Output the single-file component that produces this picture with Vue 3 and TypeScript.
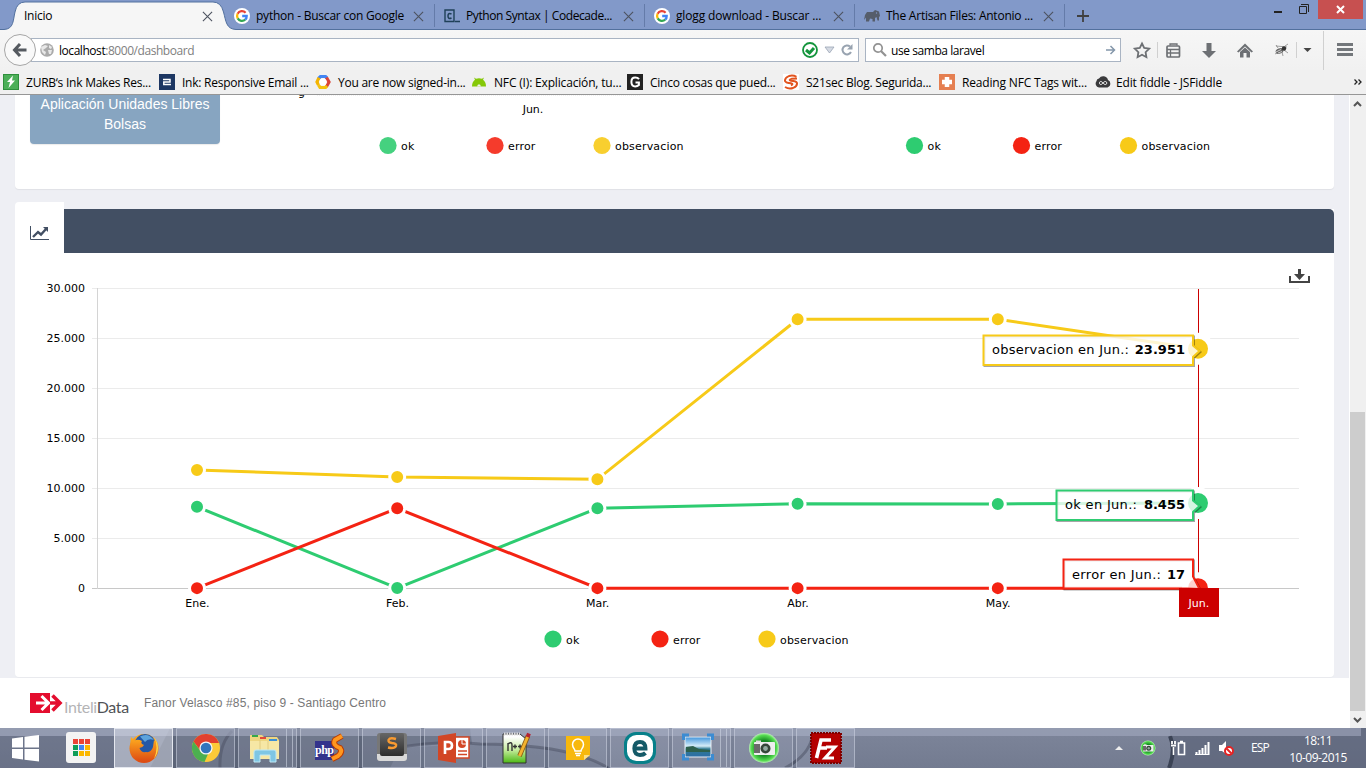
<script setup lang="ts">
interface Link { label: string; icon: string; track?: number }
interface Series { name: string; color: string; values: number[] }

const tabs: Link[] = [
  { label: 'python - Buscar con Google', icon: 'google', track: -0.22 },
  { label: 'Python Syntax | Codecade...', icon: 'codecademy', track: -0.42 },
  { label: 'glogg download - Buscar ...', icon: 'google', track: -0.15 },
  { label: 'The Artisan Files: Antonio ...', icon: 'elephant', track: -0.24 },
]
const bookmarks: Link[] = [
  { label: 'ZURB‘s Ink Makes Res...', icon: 'zurb' },
  { label: 'Ink: Responsive Email ...', icon: 'ink' },
  { label: 'You are now signed-in...', icon: 'cloud' },
  { label: 'NFC (I): Explicación, tu...', icon: 'android' },
  { label: 'Cinco cosas que pued...', icon: 'giz' },
  { label: 'S21sec Blog. Segurida...', icon: 's21' },
  { label: 'Reading NFC Tags wit...', icon: 'plus' },
  { label: 'Edit fiddle - JSFiddle', icon: 'fiddle' },
]
const apps = ['firefox', 'chrome', 'explorer', 'phps', 'sublime', 'ppt', 'npp', 'keep', 'eset', 'photos', 'camera', 'filezilla']
const stacked = ['explorer', 'photos']
const launcherDots = ['#ea4335', '#ea4335', '#ea4335', '#0f9d58', '#4285f4', '#fbb800', '#0f9d58', '#fbb800', '#fbb800']

const months = ['Ene.', 'Feb.', 'Mar.', 'Abr.', 'May.']
const ticks = [0, 5000, 10000, 15000, 20000, 25000, 30000]
const series: Series[] = [
  { name: 'ok', color: '#2ecc71', values: [8150, 20, 8000, 8450, 8440, 8520] },
  { name: 'error', color: '#f42313', values: [17, 8000, 17, 17, 17, 17] },
  { name: 'observacion', color: '#f7ca18', values: [11830, 11120, 10900, 26900, 26900, 23951] },
]
const px = (i: number): number => 197 + i * 200.2
const py = (v: number): number => 588.3 - v / 100
const tickLabel = (v: number): string => (v === 0 ? '0' : `${v / 1000}.000`)
const linePoints = (s: Series): string => s.values.map((v, i) => `${px(i)},${py(v)}`).join(' ')

const tips = [
  { label: 'observacion en Jun.:', value: '23.951', color: '#f7ca18', textX: 992, textY: 354, width: 137, path: 'M983.5 335.5H1193V345.500L1199.500 351L1193 357V365H983.5Z' },
  { label: 'ok en Jun.:', value: '8.455', color: '#2ecc71', textX: 1065, textY: 509, width: 72, path: 'M1056.5 490.5H1193V500.500L1199.500 506L1193 512V520H1056.5Z' },
  { label: 'error en Jun.:', value: '17', color: '#f42313', textX: 1072, textY: 579, width: 89, path: 'M1063.5 559.5H1193V576.500L1199.500 589L1187 588.5H1063.5Z' },
]
const legend = (x: number, y: number, colors: string[]) =>
  series.map((s, i) => ({ name: s.name, color: colors[i], x: x + i * 107, y }))
const solid = series.map((s) => s.color)
const soft = ['#45d17f', '#f53b2c', '#f8cf2f']
const topLegends = [...legend(388, 145.5, soft), ...legend(914.5, 145.5, solid)]
const mainLegend = legend(553, 639, solid)
</script>

<template>
  <div class="screen">
    <svg class="defs" width="0" height="0">
      <defs>
        <linearGradient id="gFox" x1="0" y1="0" x2="0" y2="1"><stop offset="0" stop-color="#ffb01f" /><stop offset="1" stop-color="#dd4a12" /></linearGradient>
        <linearGradient id="gSky" x1="0" y1="0" x2="0" y2="1"><stop offset="0" stop-color="#3f94dc" /><stop offset=".45" stop-color="#d5ecf8" /><stop offset=".6" stop-color="#2f7a92" /><stop offset="1" stop-color="#2d6da8" /></linearGradient>
        <linearGradient id="gNpp" x1="0" y1="0" x2="0" y2="1"><stop offset=".1" stop-color="#fff" /><stop offset=".55" stop-color="#c4ec9c" /><stop offset="1" stop-color="#4cb814" /></linearGradient>
        <linearGradient id="gKey" x1="0" y1="0" x2="0" y2="1"><stop offset="0" stop-color="#666" /><stop offset="1" stop-color="#2d2d2d" /></linearGradient>
        <radialGradient id="gCam"><stop offset=".5" stop-color="#178a24" /><stop offset=".85" stop-color="#55dc50" /><stop offset="1" stop-color="#b9efb7" /></radialGradient>
      </defs>
      <symbol id="google" viewBox="0 0 16 16"><circle cx="8" cy="8" r="8" fill="#fff" /><g fill="none" stroke-width="2.3"><path d="M11.6 4.7A5 5 0 0 0 3.6 5.7" stroke="#ea4335" /><path d="M3.6 5.7A5 5 0 0 0 3.7 10.4" stroke="#fbbc05" /><path d="M3.7 10.4A5 5 0 0 0 11.2 11.7" stroke="#34a853" /><path d="M11.2 11.7A4.8 4.8 0 0 0 12.7 8H8.2" stroke="#4285f4" /></g></symbol>
      <symbol id="codecademy" viewBox="0 0 16 16"><path d="M1 2H10V13.5H1Z M11 13.500H16" fill="none" stroke="#1f4058" stroke-width="1.4" /><path d="M7.5 6Q4 4.5 4 8T7.5 10" fill="none" stroke="#1f4058" stroke-width="1.5" /></symbol>
      <symbol id="elephant" viewBox="0 0 16 16"><path d="M0 12L1 7L3 4L9 4L11 2L15 3.500L16 8L15 9L15 12.500H13.5L12.5 9L11 10V13.500H8.5V11L6 10.5L5 13.500H2V9.500Z" fill="#555d6b" /><circle cx="12.5" cy="5" r=".7" fill="#8299c9" /></symbol>
      <symbol id="zurb" viewBox="0 0 16 16"><rect width="16" height="16" fill="#2f8f3c" /><rect x="1" y="1" width="14" height="14" fill="#4caf58" /><path d="M10 1.5L4 8H7L5.5 14L12 6.5H9Z" fill="#fff" /></symbol>
      <symbol id="ink" viewBox="0 0 16 16"><rect width="16" height="16" fill="#1d3763" /><path d="M4 5.5H11V8H4.8V10.5H12" fill="none" stroke="#fff" stroke-width="1.5" /></symbol>
      <symbol id="cloud" viewBox="0 0 16 16"><g fill="none" stroke-width="3.2"><path d="M3.500 4.500L5.500 2.500H10.5L12 4" stroke="#4285f4" /><path d="M11.5 3.5L14 8L11.5 12.5" stroke="#db4437" /><path d="M4 3.800L2 8L3.5 11" stroke="#f4b400" /><path d="M3.5 11L5 13.5H10.5L12 12" stroke="#f4c20d" /></g><circle cx="8" cy="8" r="3.6" fill="#fff" /></symbol>
      <symbol id="android" viewBox="0 0 16 16"><path d="M1 12.5Q1 8 4 5.8L3 3.5L5 4.8Q8 3.7 11 4.8L13 3.5L12 5.8Q15 8 15 12.5Z" fill="#85c808" /><path d="M6 12.500L7 10.500H9L10 12.500Z" fill="#f0f0f0" /></symbol>
      <symbol id="giz" viewBox="0 0 16 16"><rect width="16" height="16" fill="#222" /><path d="M12 5.2Q10.8 3.6 8.2 3.6Q4.4 3.6 4.4 8T8.2 12.4Q10.5 12.4 11.9 11V8.5H8.5" fill="none" stroke="#fff" stroke-width="2" /></symbol>
      <symbol id="s21" viewBox="0 0 16 16"><rect width="16" height="16" fill="#fff" /><path d="M13.500 2.800Q10 .8 6 2Q1.500 4 2 7Q3 9 8 9.200Q11 9.800 8 11.500M2 13Q6 15.500 10 14Q14.500 12 14 9Q13 7 8 6.800Q5 6 8.500 4.800L14 4.500" fill="none" stroke="#e2541f" stroke-width="1.9" /></symbol>
      <symbol id="plus" viewBox="0 0 16 16"><rect width="16" height="16" fill="#e57f51" /><path d="M8 3V13M3 8H13" stroke="#fff" stroke-width="4.500" /></symbol>
      <symbol id="fiddle" viewBox="0 0 16 16"><path d="M4 13.5A4 4 0 0 1 1.5 7A3 3 0 0 1 4 4.5A5 5 0 0 1 13 6A4 4 0 0 1 12.5 13.5Z" fill="#3a3a3c" /><path d="M8 9C6.5 7 4.5 7 4.5 9S6.5 11 8 9S11.7 7 11.7 9S9.5 11 8 9" fill="none" stroke="#fff" /></symbol>

      <symbol id="firefox" viewBox="0 0 32 32"><circle cx="16" cy="16.5" r="14.5" fill="url(#gFox)" /><circle cx="17" cy="12.5" r="10.500" fill="#2458a6" /><path d="M12 4.500Q20 0 26 8Q20 6 17 10Z" fill="#5ca3dc" /><path d="M3 5L6.5 8.500Q10 7 14 9Q12 12 16 13Q15 15.500 11.5 16Q13 21 18 20Q23 21 25 15L26 8Q32 15 28 24Q21 33 9 28Q0 22 3 5Z" fill="url(#gFox)" /><path d="M26 5Q34 16 26 27Q31 15 26 5" fill="#ffd445" /></symbol>
      <symbol id="chrome" viewBox="0 0 32 32"><circle cx="16" cy="16" r="14" fill="#fcca38" /><path d="M3.5 9.5A14 14 0 0 1 29 11H16L10 18Z" fill="#e2402f" /><path d="M3.5 9.5L10.5 19L18 22L14.5 30A14 14 0 0 1 3.5 9.5" fill="#4caf50" /><circle cx="16" cy="16" r="6.6" fill="#f5f5f5" /><circle cx="16" cy="16" r="5.3" fill="#3275bd" /></symbol>
      <symbol id="explorer" viewBox="0 0 32 32"><path d="M2 3H14L16 5H29L31 8V27H2Z" fill="#eed680" /><path d="M2 9H31V27H2Z" fill="#f6e7a5" /><path d="M12 8V19M20 9V18" stroke="#e2cc80" /><path d="M4 4H10" stroke="#35a84a" stroke-width="2" /><path d="M12 6H18" stroke="#e24a3b" stroke-width="2" /><path d="M21 8H29" stroke="#3a8fd8" stroke-width="2" /><path d="M6 30V20Q6 18 8 18H26Q28 18 28 20V30H22V23H12V30Z" fill="#7fc6e4" stroke="#bfe8f5" /></symbol>
      <symbol id="phps" viewBox="0 0 32 32"><rect x="1" y="9" width="19" height="19" fill="#33338c" /><path d="M28 4L21 8Q18 13 26 16Q29 20 24 24L18 27" fill="none" stroke="#b83b05" stroke-width="6" /><path d="M28 4L21 8Q18 13 26 16Q29 20 24 24L18 27" fill="none" stroke="#ff971f" stroke-width="4" /></symbol>
      <symbol id="sublime" viewBox="0 0 32 32"><rect x="1" y="1" width="30" height="28" rx="3" fill="#777" /><path d="M1 22L31 22V26Q31 29 28 29H4Q1 29 1 26Z" fill="#d9d9d9" /><rect x="4" y="1" width="24" height="23" rx="2" fill="url(#gKey)" /><path d="M20 7Q14 5 12.500 8Q12 10.500 16 11Q21 11.500 20 14Q18.500 17 12 15.500" fill="none" stroke="#f89a31" stroke-width="2.400" /></symbol>
      <symbol id="ppt" viewBox="0 0 32 32"><rect x="15" y="5" width="16" height="21" fill="#fff" stroke="#d44726" stroke-width="1.5" /><circle cx="24" cy="12" r="4" fill="#d44726" /><path d="M24 12V7.500M24 12H28.500" stroke="#fff" /><path d="M20 19H29M20 22.5H29" stroke="#d44726" stroke-width="1.6" /><path d="M0 4L18 1V31L0 28Z" fill="#d24625" /><path d="M7 22V10H10.5Q14 10 14 13.5T10.5 17H7" fill="none" stroke="#fff" stroke-width="2.6" /></symbol>
      <symbol id="npp" viewBox="0 0 32 32"><path d="M3 2H20L26 7V31H3Z" fill="url(#gNpp)" stroke="#333" /><path d="M4 2H20" stroke="#ddd" stroke-width="3" stroke-dasharray="1.5 1" /><path d="M8 19V11M8 12Q12 9 12 13V19M13 14.5H17M15 12.5V16.5M18 14.5H22M20 12.5V16.5" fill="none" stroke="#333" stroke-width="1.4" /><path d="M28 4L19.500 24" stroke="#8a5a14" stroke-width="4.5" /><path d="M28 4L19.500 24" stroke="#f2b32f" stroke-width="3" /><path d="M29 1.5L27.500 5" stroke="#b52330" stroke-width="4" /></symbol>
      <symbol id="keep" viewBox="0 0 32 32"><path d="M4 4H28V23L22 28H4Z" fill="#f7b80d" /><path d="M22 28V23H28Z" fill="#ffe082" /><path d="M13 19C13 17 10.5 16 10.5 12.5A5.5 5.5 0 0 1 21.5 12.5C21.5 16 19 17 19 19ZM13 21.5H19M14 23.5H18" fill="none" stroke="#fff" stroke-width="1.5" /></symbol>
      <symbol id="eset" viewBox="0 0 32 32"><rect x="0" y="0" width="32" height="32" rx="12" fill="#07808a" /><rect x="3" y="3" width="26" height="26" rx="9.500" fill="#fff" /><path d="M10.5 16.5H21.5Q21.5 10 16 10T10.3 16.5Q10.5 23 16 23Q19.5 23 21.5 21" fill="none" stroke="#145a68" stroke-width="3.9" /></symbol>
      <symbol id="photos" viewBox="0 0 32 32"><rect x="3" y="5" width="26" height="20" fill="url(#gSky)" stroke="#e8eef4" /><path d="M4 15L11 14L17 17L28 18V20H4Z" fill="#2e604d" /><path d="M1.5 8V3H7M25 3H30.5V8M30.5 22V27H25M7 27H1.5V22" fill="none" stroke="#3c8cd2" stroke-width="3" /></symbol>
      <symbol id="camera" viewBox="0 0 32 32"><circle cx="16" cy="16" r="15" fill="url(#gCam)" /><rect x="6" y="10" width="21" height="13" rx="1" fill="#eee" /><rect x="8" y="8.5" width="5" height="2" fill="#ddd" /><path d="M6 16.500H12" stroke="#333" stroke-width="9" opacity=".7" /><circle cx="17.5" cy="16.5" r="5" fill="#354639" /><circle cx="17.5" cy="16.5" r="2.4" fill="#93aaa0" /></symbol>
      <symbol id="filezilla" viewBox="0 0 32 32"><rect x="1" y="1" width="30" height="30" fill="#b40000" stroke="#7d0000" stroke-width="2" stroke-dasharray="2 1" /><path d="M6.500 26L11 8H21M8 16H17" fill="none" stroke="#fff" stroke-width="3.6" /><path d="M16 15H25L15 26H24" fill="none" stroke="#fff" stroke-width="3" /></symbol>
    </svg>

    <header class="tabstrip">
      <svg class="tab-shape" width="236" height="30" viewBox="0 0 236 30"><path d="M0 30V29.5H4C14 29 13 20 15 12Q17 2 25 2H213Q221 2 223.5 12C226 21 226 29 236 29.5V30Z" fill="#f6f6f6" /><path d="M0 29.5H4C14 29 13 20 15 12Q17 2 25 2H213Q221 2 223.5 12C226 21 226 29 236 29.5" fill="none" stroke="#52709e" /></svg>
      <div class="tab active"><span class="tab-label">Inicio</span><svg class="x" viewBox="0 0 12 12"><path d="M1 1L11 11M11 1L1 11" /></svg></div>
      <div v-for="(t, i) in tabs" :key="i" class="tab">
        <svg class="fav"><use :href="'#' + t.icon" /></svg>
        <span class="tab-label" :style="{ letterSpacing: t.track + 'px' }">{{ t.label }}</span>
        <svg class="x" viewBox="0 0 12 12"><path d="M1 1L11 11M11 1L1 11" /></svg>
      </div>
      <svg class="newtab" viewBox="0 0 12 12"><path d="M6 0V12M0 6H12" stroke="#404040" stroke-width="1.8" /></svg>
      <div class="winbtns">
        <svg width="44" height="20"><path d="M8 12H16" stroke="#222" stroke-width="2" /><path d="M33.5 6.5H40.5V13.5H33.5ZM35 4.5H42.5V12" fill="none" stroke="#222" /></svg>
        <div class="close"><svg width="9" height="9" viewBox="0 0 9 9"><path d="M1 1L8 8M8 1L1 8" stroke="#fff" stroke-width="2" /></svg></div>
      </div>
    </header>

    <div class="nav">
      <div class="back"><svg width="16" height="16" viewBox="0 0 16 16"><path d="M8 2L2.5 8L8 14M3 8H14.5" fill="none" stroke="#555a60" stroke-width="3" /></svg></div>
      <div class="url">
        <svg width="14" height="14" viewBox="0 0 14 14"><circle cx="7" cy="7" r="6.8" fill="#aaa" /><path d="M1 4L5 2L8 3L6 5L3 7L6 9L5 12L2 9ZM9 2L12 4L11 6L9 5ZM8 7L12 7L11 11L9 11Z" fill="#e8e8e8" /></svg>
        <span class="addr">localhost<i>:8000/dashboard</i></span>
        <svg class="url-icons" width="54" height="18" viewBox="0 0 54 18"><circle cx="10" cy="9" r="7" fill="#fff" stroke="#14953c" stroke-width="1.8" /><path d="M6 9L9.500 12L14 7" fill="none" stroke="#14953c" stroke-width="3" /><path d="M25 6H34L29.5 12Z" fill="#d5dae3" stroke="#9aa5b5" stroke-width=".8" /><path d="M50 5.5A4.5 4.5 0 1 0 51 11" fill="none" stroke="#98a3b0" stroke-width="2" /><path d="M47 8.5H52.5V3Z" fill="#98a3b0" /></svg>
      </div>
      <div class="search">
        <svg width="16" height="16" viewBox="0 0 16 16"><circle cx="6" cy="6" r="4.2" fill="none" stroke="#929292" stroke-width="1.7" /><path d="M9 9L14 14" stroke="#929292" stroke-width="2.2" /></svg>
        <span>use samba laravel</span>
        <svg class="go" width="10" height="10" viewBox="0 0 10 10"><path d="M0 5H8M4.5 1L8.5 5L4.5 9" fill="none" stroke="#8497aa" stroke-width="1.5" /></svg>
      </div>
      <svg class="tools" width="242" height="40" viewBox="1124 30 242 40">
        <g fill="none" stroke="#6d7074">
          <path d="M1142 43.5L1144.2 48L1149.2 48.7L1145.6 52.2L1146.4 57.2L1142 54.8L1137.6 57.2L1138.4 52.2L1134.8 48.7L1139.8 48Z" stroke-width="1.8" />
          <rect x="1167" y="46" width="12.5" height="11" rx="1" stroke-width="1.7" /><path d="M1170 45.5V44H1177V45.5M1167 49.5H1180M1167 53H1180M1170.5 49V57" stroke-width="1.3" />
          <path d="M1209 43V52" stroke-width="5" />
        </g>
        <path d="M1202 51H1216L1209 58Z" fill="#6d7074" />
        <path d="M1237 51.5L1245 43.5L1253 51.5L1251.5 52.5L1245 46.5L1238.5 52.5ZM1240 52L1245 47.5L1250 52V57.5H1246.5V53H1243.5V57.5H1240Z" fill="#6d7074" />
        <path d="M1276 46L1287 47M1275 54L1279 52M1278 48L1276 45M1284 50L1288 53M1282 52L1283 56M1285 46L1288 44" stroke="#888" stroke-width=".8" /><ellipse cx="1279.5" cy="51" rx="4" ry="2.600" fill="#666" transform="rotate(-20 1279.5 51)" /><circle cx="1284" cy="48.500" r="2.200" fill="#333" /><path d="M1276 52L1281 49.500M1278 53L1282 51.500" stroke="#ccc" />
        <path d="M1157.5 42V58M1296.5 42V58M1323.5 31V70" stroke="#d0d0d0" />
        <path d="M1303.5 48H1311.5L1307.5 52Z" fill="#454545" />
        <path d="M1337 44.5H1353M1337 49.5H1353M1337 54.5H1353" stroke="#73777b" stroke-width="3" />
      </svg>
    </div>

    <div class="bookmarks">
      <div v-for="b in bookmarks" :key="b.icon" class="bm" :class="b.icon"><svg class="fav"><use :href="'#' + b.icon" /></svg><span>{{ b.label }}</span></div>
      <svg class="more" width="8" height="6" viewBox="0 0 8 6"><path d="M.5 .5L3 3L.5 5.5M4.5 .5L7 3L4.5 5.5" fill="none" stroke="#222" stroke-width="1.3" /></svg>
    </div>

    <div class="view">
      <main class="page">
        <section class="card top">
          <div class="app-btn">Aplicación Unidades Libres Bolsas</div>
          <svg class="chart" width="1114" height="94" viewBox="220 95 1114 94">
            <path d="M317 95.5H640" stroke="#f0f0f0" stroke-dasharray="1 1" />
            <text x="298" y="95.5">g</text>
            <text x="533" y="113" text-anchor="middle">Jun.</text>
            <g v-for="l in topLegends" :key="l.x"><circle :cx="l.x" :cy="l.y" r="8.6" :fill="l.color" /><text class="legend" :x="l.x + 13" :y="l.y + 4.5">{{ l.name }}</text></g>
          </svg>
        </section>

        <section class="panel">
          <div class="head">
            <div class="head-tab"><svg width="20" height="16" viewBox="0 0 20 16"><path d="M.5 1V14.5H19" fill="none" stroke="#424f63" /><path d="M3 12L8 7L11 9.5L16 4" fill="none" stroke="#424f63" stroke-width="2.4" /><path d="M13 2H18V7Z" fill="#424f63" /></svg></div>
            <div class="head-bar"></div>
          </div>
          <svg class="chart" width="1319" height="424" viewBox="15 253 1319 424">
            <g v-for="t in ticks" :key="t">
              <path :d="`M92 ${588.5 - t / 100}H1299`" :stroke="t ? '#ebebeb' : '#c8c8c8'" />
              <text x="85" :y="592 - t / 100" text-anchor="end">{{ tickLabel(t) }}</text>
            </g>
            <path d="M97.5 288V589" stroke="#d4d4d4" />
            <text v-for="(m, i) in months" :key="m" :x="px(i) + .3" y="607" text-anchor="middle">{{ m }}</text>
            <path d="M1198.5 289V588" stroke="#cc0000" />
            <g v-for="s in series" :key="s.name">
              <polyline :points="linePoints(s)" fill="none" :stroke="s.color" stroke-width="3" />
              <circle v-for="(v, i) in s.values" :key="i" :cx="px(i)" :cy="py(v)" :r="i === 5 ? 13 : 7.5" :fill="s.color" stroke="#fff" :stroke-width="i === 5 ? 6 : 3" />
            </g>
            <g v-for="t in tips" :key="t.value">
              <path :d="t.path" class="tip-shadow" />
              <path :d="t.path" fill="#fff" fill-opacity=".8" :stroke="t.color" stroke-width="2" />
              <text class="tip" :x="t.textX" :y="t.textY" :textLength="t.width">{{ t.label }}</text>
              <text class="tip bold" x="1185" :y="t.textY" text-anchor="end">{{ t.value }}</text>
            </g>
            <rect x="1179" y="588" width="40" height="29" fill="#cc0000" />
            <text x="1198.8" y="607" text-anchor="middle" fill="#fff">Jun.</text>
            <g v-for="l in mainLegend" :key="l.x"><circle :cx="l.x" :cy="l.y" r="8.6" :fill="l.color" /><text class="legend" :x="l.x + 13" :y="l.y + 5">{{ l.name }}</text></g>
            <path d="M1299.5 269V276" stroke="#444" stroke-width="3" /><path d="M1294 274H1305L1299.5 280Z" fill="#444" /><path d="M1290 276V282H1309V276" fill="none" stroke="#444" stroke-width="2" />
          </svg>
        </section>

        <footer class="footer">
          <svg width="34" height="21" viewBox="0 0 34 21"><path d="M0 0H20V20H0Z" fill="#e40d2e" /><path d="M6 10H18M11.500 3L18.500 10L11.500 17" fill="none" stroke="#fff" stroke-width="3" /><path d="M20 10H29M22.500 2.500L30 10L22.500 17.500" fill="none" stroke="#e40d2e" stroke-width="3.600" /></svg>
          <span class="brand"><b>Inteli</b>Data</span>
          <span class="address">Fanor Velasco #85, piso 9 - Santiago Centro</span>
        </footer>
      </main>
      <div class="scroll">
        <svg width="9" height="6" viewBox="0 0 9 6"><path d="M1 5L4.5 1.5L8 5" fill="none" stroke="#555" stroke-width="2" /></svg>
        <div class="thumb"></div>
        <svg width="9" height="6" viewBox="0 0 9 6"><path d="M1 1L4.5 4.5L8 1" fill="none" stroke="#555" stroke-width="2" /></svg>
      </div>
    </div>

    <div class="taskbar">
      <svg class="wall" width="1366" height="40" viewBox="0 0 1366 40"><path d="M0 8H170V40H0Z" fill="#5d657a" opacity=".4" /><path d="M170 0H470L472 16Q420 15 400 20L390 40H150Z" fill="#3d4659" opacity=".45" /><path d="M470 16Q570 16 608 40H390L400 20Z" fill="#3d4659" opacity=".2" /><path d="M220 40Q219 16 232 3M395 20Q440 12 480 16Q570 16 608 40M785 40Q808 28 812 10" fill="none" stroke="#343b4c" stroke-width="3" opacity=".55" /><path d="M1170 8Q1176 22 1169 40H1366V0H1170Z" fill="#596176" opacity=".65" /><path d="M1170 8Q1176 22 1169 40" fill="none" stroke="#3b4355" stroke-width="4" /><path d="M0 0H1361V8H0Z" fill="#a4aabf" opacity=".6" /></svg>
      <svg class="start" width="27" height="27" viewBox="0 0 27 27"><path d="M0 3.5L11 2V12.5H0ZM12.5 1.8L27 0V12.5H12.5ZM0 14H11V24.5L0 23ZM12.5 14H27V26.5L12.5 24.8Z" fill="#fff" /></svg>
      <div class="launch"><i v-for="(c, i) in launcherDots" :key="i" :style="{ background: c }"></i></div>
      <div class="apps">
        <div v-for="a in apps" :key="a" class="app" :class="{ current: a === 'firefox', stack: stacked.includes(a) }"><svg width="32" height="32"><use :href="'#' + a" /></svg><b v-if="a === 'phps'" class="php">php</b></div>
      </div>
      <div class="tray">
        <svg width="8" height="4" viewBox="0 0 8 4"><path d="M4 0L8 4H0Z" fill="#eee" /></svg>
        <svg class="t-cam" width="16" height="16"><use href="#camera" /></svg>
        <svg class="t-sys" width="64" height="16" viewBox="0 0 64 16"><g fill="none" stroke="#fff"><path d="M7.5 3H13.5V14.5H7.5ZM9 1.5H12M2.5 7V15" stroke-width="1.6" /><path d="M1 1V4M4 1V4M0 5.5H5" stroke-width="1.8" /><path d="M25.5 12V15M28.5 10V15M31.5 8V15M34.5 5V15M37.5 2V15" stroke-width="2" /></g><path d="M24 14.5H38" stroke="#fff" /><path d="M48 5H51L55 1V14L51 11H48Z" fill="#fff" /><circle cx="58" cy="11" r="4" fill="#fff" stroke="#e42323" stroke-width="2" /><path d="M55.5 8.5L60.5 13.5" stroke="#e42323" stroke-width="2" /></svg>
        <span class="lang">ESP</span>
        <div class="clock"><span>18:11</span><span>10-09-2015</span></div>
      </div>
    </div>
  </div>
</template>

<style>
html, body { margin: 0; overflow: hidden; }
</style>

<style scoped>
.screen { width: 1366px; height: 768px; display: flex; flex-direction: column; overflow: hidden; position: relative; font: 12px/16px "Open Sans", "Noto Sans", sans-serif; color: #000; background: #fff; }
.screen * { box-sizing: border-box; }
svg { display: block; flex: none; }
span { white-space: nowrap; }
.defs { position: absolute; }
.fav { width: 16px; height: 16px; }
.tabstrip { height: 30px; flex: none; display: flex; position: relative; background: linear-gradient(#8299c9 28.5px, #52709e 29px); }
.tab-shape { position: absolute; left: 0; top: 0; }
.tab { position: relative; width: 210px; height: 30px; flex: none; display: flex; align-items: center; padding: 2px 11px 0 9px; }
.tab::after { content: ""; position: absolute; right: 0; top: 4px; height: 23px; border-right: 1px solid #647ba9; }
.tab.active { width: 225px; padding-left: 24px; }
.tab.active::after { display: none; }
.tab-label { flex: 1; margin-left: 6px; letter-spacing: -.25px; }
.active .tab-label { margin-left: 0; }
.x { width: 11px; height: 11px; stroke: #4d5360; stroke-width: 1.2; }
.newtab { width: 12px; height: 12px; margin: 10px 0 0 12px; }
.winbtns { display: flex; margin-left: auto; }
.winbtns > svg { margin-right: 8px; }
.close { width: 45px; height: 19px; margin-right: 3px; background: #c75050; display: flex; align-items: center; justify-content: center; }
.active .x { margin-right: 1px; }
.nav { height: 40px; flex: none; display: flex; align-items: center; background: linear-gradient(#f6f6f6, #f1f1f1); }
.back { width: 32px; height: 32px; border: 1px solid #a6a6a6; border-radius: 50%; background: #f9f9f9; margin-left: 4px; z-index: 1; display: flex; align-items: center; justify-content: center; }
.url { height: 24px; width: 828px; margin-left: -5px; padding-left: 8px; background: #fff; border: 1px solid #a9b4c3; display: flex; align-items: center; }
.addr { margin: 2px 0 0 5px; letter-spacing: -.45px; }
.addr i { font-style: normal; color: #808080; }
.url-icons { margin-left: auto; margin-right: 4px; }
.search { height: 24px; width: 256px; margin-left: 6px; background: #fff; border: 1px solid #a9b4c3; display: flex; align-items: center; padding: 0 4px 0 6px; letter-spacing: -.43px; }
.search span { margin: 2px 0 0 3px; }
.go { margin-left: auto; }
.tools { margin-left: auto; }
.bookmarks { height: 25px; flex: none; display: flex; align-items: center; background: #f0f0f0; border-bottom: 1px solid #969696; padding-left: 3px; }
.bm { width: 156px; display: flex; align-items: center; letter-spacing: -.24px; }
.bm span { margin: 2px 0 0 7px; }
.bm.fiddle span { margin-left: 5px; letter-spacing: -.16px; }
.bm.android span, .bm.plus span { letter-spacing: -.17px; }
.more { margin-left: auto; margin-right: 4px; }
.view { height: 633px; flex: none; display: flex; }
.page { width: 1349px; background: #eeeff4; display: flex; flex-direction: column; }
.card.top { height: 94px; margin: 0 15px; width: 1319px; flex: none; background: #fff; border-radius: 0 0 4px 4px; box-shadow: 0 1px 1px rgba(0,0,0,.06); display: flex; padding-left: 15px; overflow: hidden; }
.app-btn { width: 190px; height: 50px; flex: none; background: #87a5c1; color: #fff; border-radius: 0 0 4px 4px; text-align: center; font: 14px/20px "Liberation Sans", Arial, sans-serif; letter-spacing: 0; padding: 0 6px; margin-top: -1px; box-shadow: 0 1px 1px rgba(0,0,0,.08); }
.chart { overflow: hidden; }
.chart text { font: 11px "DejaVu Sans", Verdana, sans-serif; }
.chart text.legend { letter-spacing: .18px; }
.chart text.tip { font-size: 13px; }
.chart text.bold { font-weight: bold; }
.tip-shadow { fill: none; stroke: #000; stroke-opacity: .35; stroke-width: 2; transform: translate(1px, 1px); }
.panel { margin: 13px 15px 0; width: 1319px; flex: none; border-radius: 4px; background: linear-gradient(transparent 7px, #fff 7px); box-shadow: 0 1px 0 #e9eaee; }
.head { display: flex; height: 51px; align-items: flex-end; }
.head-tab { width: 49px; height: 51px; background: #fff; border-radius: 4px 0 0; padding: 23px 0 0 15px; }
.head-bar { flex: 1; height: 44px; background: #424f63; border-radius: 0 5px 0 0; }
.footer { height: 50px; margin-top: 1px; flex: none; background: #fff; display: flex; align-items: center; padding-left: 30px; }
.brand { font: 16px/20px Lato, sans-serif; letter-spacing: -.35px; color: #505256; margin: 7px 0 0; width: 66px; }
.brand b { font-weight: normal; color: #b4b4b6; }
.address { margin-left: 14px; color: #777; font: 12px/16px "Liberation Sans", Arial, sans-serif; letter-spacing: .14px; }
.scroll { width: 17px; background: #f0f0f0; border-left: 1px solid #fff; display: flex; flex-direction: column; align-items: center; justify-content: space-between; padding: 6px 1px 5px 0; }
.thumb { width: 15px; height: 299px; margin-top: auto; margin-bottom: 6px; background: #cdcdcd; }
.taskbar { height: 40px; flex: none; display: flex; position: relative; background: linear-gradient(#7d859a, #737b90); }
.wall { position: absolute; left: 0; top: 0; }
.start { position: relative; margin: 7px 0 0 12px; }
.launch { position: relative; width: 30px; height: 31px; margin: 4px 0 0 27px; border-radius: 3px; background: #f3f3f3; display: grid; grid-template-columns: repeat(3, 5px); grid-auto-rows: 5px; gap: 1px; justify-content: center; align-content: center; }
.apps { position: relative; display: flex; gap: 3px; margin-left: 18px; }
.app { position: relative; width: 59px; height: 40px; border: 1px solid rgba(205,211,225,.55); background: rgba(195,202,222,.18); display: flex; align-items: center; justify-content: center; }
.app.current { background: rgba(220,224,236,.52); border-color: #e4e7ef; }
.app.stack { padding-right: 8px; }
.app.stack::after { content: ""; position: absolute; right: 3px; top: 0; width: 5px; height: 38px; border-left: 1px solid rgba(205,211,225,.6); border-right: 1px solid rgba(205,211,225,.6); }
.php { position: absolute; left: 14px; top: 14px; color: #fff; font: bold 12px/14px "Liberation Serif", serif; letter-spacing: -.5px; }
.tray { position: relative; margin-left: auto; display: flex; align-items: center; color: #fff; font-size: 12px; padding-right: 18px; }
.t-cam { margin-left: 17px; }
.t-sys { margin-left: 15px; }
.lang { margin-left: 16px; letter-spacing: -.8px; }
.clock { width: 60px; margin-left: 19px; padding-top: 1px; display: flex; flex-direction: column; align-items: center; line-height: 17px; letter-spacing: -.5px; }
</style>
